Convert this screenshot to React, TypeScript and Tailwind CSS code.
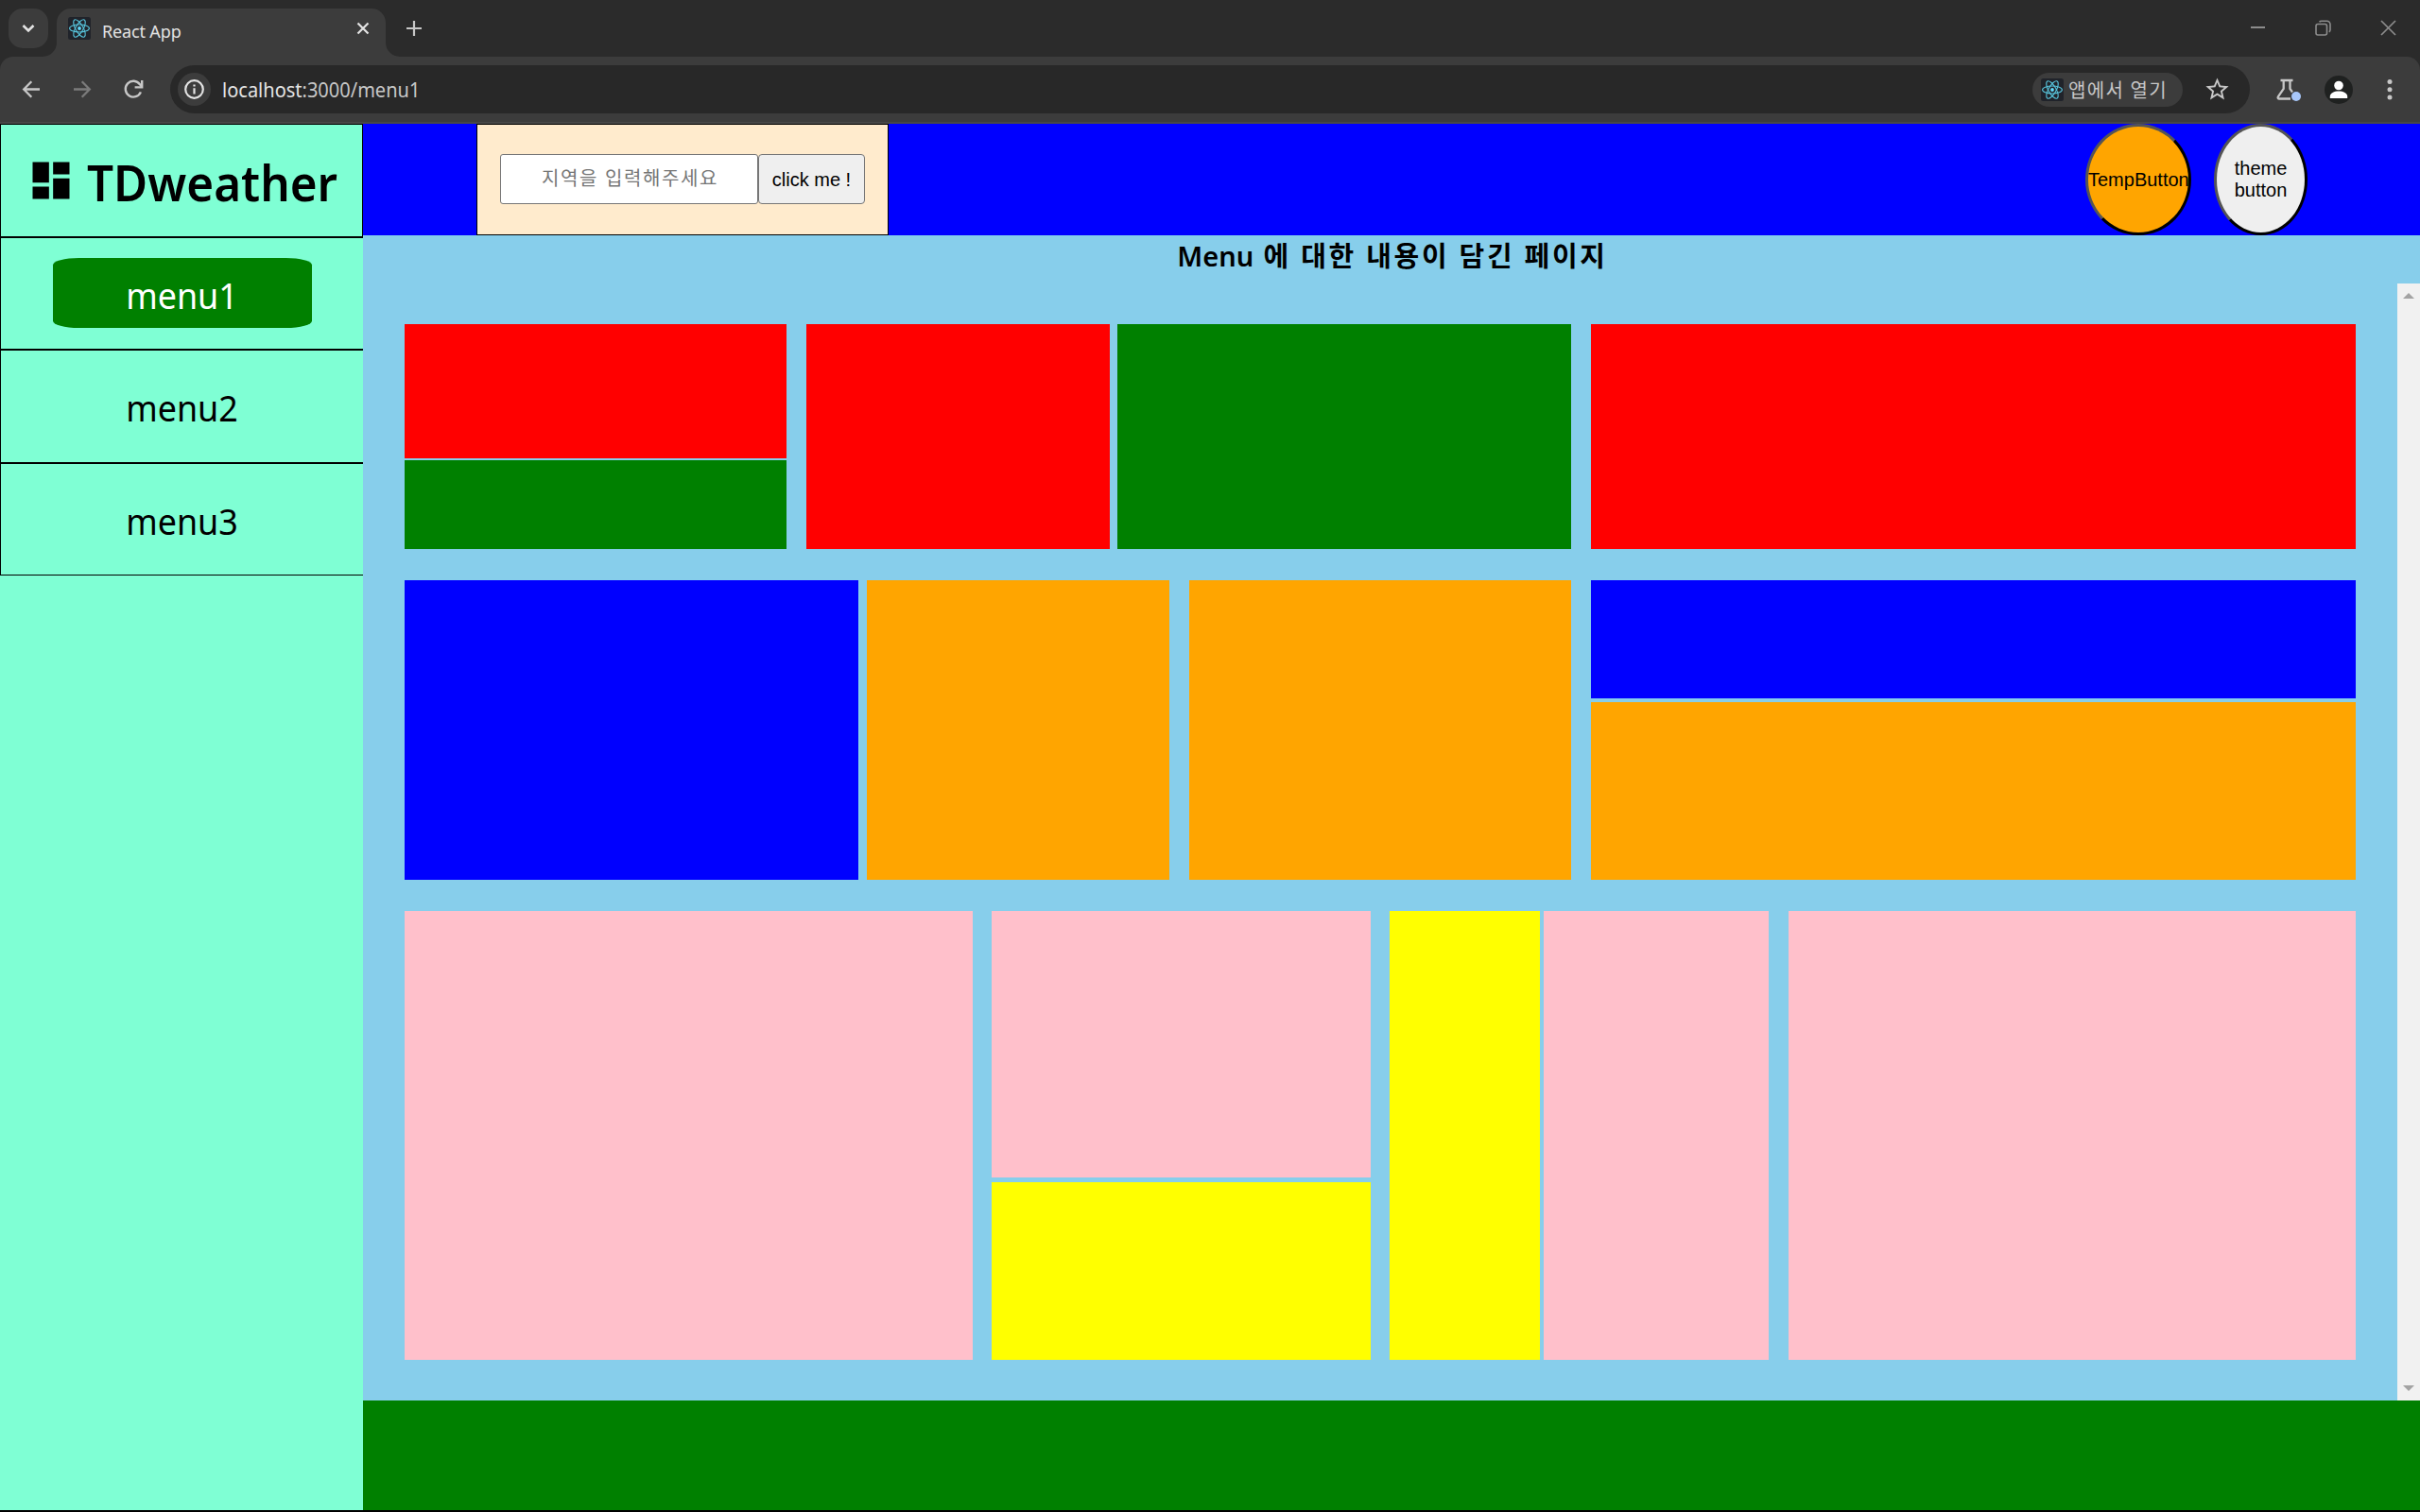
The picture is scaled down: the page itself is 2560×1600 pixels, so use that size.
import { MdDashboard, MdStarOutline } from "react-icons/md";

const KO = "font-['Noto_Sans','Noto_Sans_CJK_KR',sans-serif]";
const ARIAL = "font-['Liberation_Sans',sans-serif]";

function ReactLogo() {
  return (
    <svg viewBox="0 0 24 24" className="block size-6 shrink-0">
      <rect width="24" height="24" rx="2.5" fill="#20232a" />
      <g fill="none" stroke="#58c4dc" strokeWidth="1.1">
        <ellipse cx="12" cy="12" rx="10.4" ry="4" />
        <ellipse cx="12" cy="12" rx="10.4" ry="4" transform="rotate(60 12 12)" />
        <ellipse cx="12" cy="12" rx="10.4" ry="4" transform="rotate(120 12 12)" />
      </g>
      <circle cx="12" cy="12" r="1.9" fill="#61dafb" />
    </svg>
  );
}

function TabStrip() {
  return (
    <div className="flex h-[60px] items-start bg-[#2b2b2b]">
      <div className="ml-[9px] mt-[9px] flex size-[42px] items-center justify-center rounded-[15px] bg-[#3c3c3c]">
        <svg width="14" height="10" viewBox="0 0 14 10" fill="none" stroke="#e3e3e3" strokeWidth="2.6">
          <path d="M1.5 2 7 7.5 12.500 2" />
        </svg>
      </div>
      <svg width="15" height="15" viewBox="0 0 15 15" className="-ml-[6px] mt-[45px]">
        <path d="M15 0v15H0A15 15 0 0 0 15 0Z" fill="#3c3c3c" />
      </svg>
      <div className="mt-[9px] flex h-[51px] w-[348px] items-start rounded-t-[15px] bg-[#3c3c3c] pl-3 pt-[9px]">
        <ReactLogo />
        <span className={`${KO} ml-[12px] mt-[2px] text-[18px] leading-[26px] tracking-[-0.15px] text-[#e3e3e3]`}>React App</span>
        <svg width="14" height="14" viewBox="0 0 14 14" stroke="#e3e3e3" strokeWidth="2.2" className="ml-auto mr-[17px] mt-[5px]">
          <path d="M1.500 1.500l11 11M12.500 1.500l-11 11" />
        </svg>
      </div>
      <svg width="15" height="15" viewBox="0 0 15 15" className="mt-[45px]">
        <path d="M0 0v15H15A15 15 0 0 1 0 0Z" fill="#3c3c3c" />
      </svg>
      <svg width="16" height="16" viewBox="0 0 16 16" stroke="#c7c7c7" strokeWidth="2.2" className="ml-[7px] mt-[22px]">
        <path d="M8 0v16M0 8h16" />
      </svg>
      <div className="ml-auto mr-[25px] mt-[21px] flex gap-[52px]">
        <svg width="17" height="17" viewBox="0 0 17 17" stroke="#8c8c8c" strokeWidth="2">
          <path d="M1 8h15" />
        </svg>
        <svg width="17" height="17" viewBox="0 0 17 17" fill="none" stroke="#8c8c8c" strokeWidth="1.600">
          <rect x="1" y="4.500" width="11.500" height="11.500" rx="2" />
          <path d="M4.500 2.300Q5.200 1.200 7 1.200h5.500a3.500 3.500 0 0 1 3.500 3.500V10.500q0 1.500-1.200 2.200" />
        </svg>
        <svg width="17" height="17" viewBox="0 0 17 17" stroke="#8c8c8c" strokeWidth="1.700">
          <path d="M1 1l15 15M16 1 1 16" />
        </svg>
      </div>
    </div>
  );
}

function Toolbar() {
  return (
    <div className="bg-[#2b2b2b]">
      <div className="flex h-[71px] items-start rounded-t-[14px] border-b-2 border-[#474747] bg-[#3c3c3c]">
        <svg width="20" height="20" viewBox="0 0 20 20" fill="none" stroke="#c7c7c7" strokeWidth="2.300" className="ml-[23px] mt-[25px]">
          <path d="M19 9.500H2.500M10.300 1.300 2.200 9.500l8.100 8.200" />
        </svg>
        <svg width="20" height="20" viewBox="0 0 20 20" fill="none" stroke="#7b7b7b" strokeWidth="2.300" className="ml-[34px] mt-[25px]">
          <path d="M1 9.500h16.500M9.700 1.300l8.100 8.200-8.100 8.200" />
        </svg>
        <svg width="22" height="22" viewBox="0 0 22 22" className="ml-[34px] mt-[24px]">
          <path d="M17.900 13.400A8.400 8.400 0 1 1 17 5.300L19.200 8" fill="none" stroke="#c7c7c7" strokeWidth="2.400" />
          <path d="M18 1h2.400v8.600H11.600V7.200H18Z" fill="#c7c7c7" />
        </svg>
        <div className="ml-[27px] mt-[9px] flex h-[51px] w-[2200px] items-center rounded-full bg-[#282828] pl-2">
          <div className="flex size-[35px] items-center justify-center rounded-full bg-[#3c3c3c]">
            <svg width="21" height="21" viewBox="0 0 21 21" fill="none" stroke="#e3e3e3">
              <circle cx="10.500" cy="10.500" r="9.300" strokeWidth="2.200" />
              <path d="M10.500 9.300v6.200M10.500 5.400v2.200" strokeWidth="2.200" />
            </svg>
          </div>
          <span className={`${KO} ml-[12px] origin-left scale-x-[0.953] text-[21px] leading-[28px] text-[#c7c7c7]`}>
            <span className="text-[#e3e3e3]">localhost</span>:3000/menu1
          </span>
          <div className="ml-auto mr-[22px] flex h-9 w-[159px] items-center rounded-full bg-[#3c3c3c] pl-[9px]">
            <ReactLogo />
            <span className={`${KO} ml-[5px] pt-0.5 text-[20px] leading-[28px] tracking-[1.300px] text-[#c7c7c7]`}>앱에서 열기</span>
          </div>
          <MdStarOutline className="mr-[20px] size-[29px] text-[#c7c7c7]" />
        </div>
        <svg width="28" height="28" viewBox="0 0 28 28" fill="none" className="ml-[27px] mt-[22px]">
          <path d="M5.500 3h13M8.700 3v9L2.900 20.300c-.7 1.200 0 2.200 1.200 2.200H16M15.500 3v9l2.500 3.500" stroke="#c7c7c7" strokeWidth="2.300" />
          <circle cx="22" cy="20" r="5" fill="#a8c7fa" />
        </svg>
        <svg width="30" height="30" viewBox="0 0 30 30" className="ml-[24px] mt-[20px]">
          <circle cx="15" cy="15" r="15" fill="#1f2120" />
          <circle cx="15" cy="10.500" r="4.800" fill="#fff" />
          <path d="M5.800 24v-2c0-3.500 4.500-5.500 9.200-5.500s9.200 2 9.200 5.500v2Z" fill="#fff" />
        </svg>
        <svg width="6" height="22" viewBox="0 0 6 22" fill="#c7c7c7" className="ml-[36px] mt-[24px]">
          <circle cx="3" cy="2.500" r="2.500" />
          <circle cx="3" cy="10.700" r="2.500" />
          <circle cx="3" cy="19" r="2.500" />
        </svg>
      </div>
    </div>
  );
}

function Sidebar() {
  return (
    <aside className={`${KO} w-96 shrink-0 bg-[#7fffd4] text-black`}>
      <div className="flex h-[120px] items-center border border-black pl-[27px]">
        <MdDashboard className="size-[52px]" />
        <span className="ml-[12px] origin-left scale-x-[0.95] pt-[4px] text-[52px] leading-[60px] font-semibold">TDweather</span>
      </div>
      <nav className="text-[39px] leading-[50px]">
        <div className="flex h-[119px] items-start justify-center border border-r-0 border-black pt-[21px]">
          <div className="flex h-[74px] w-[274px] items-center justify-center rounded-[10%] bg-[#008000] pt-1 text-white">
            <span className="scale-x-[0.92]">menu1</span>
          </div>
        </div>
        <div className="flex h-[120px] items-center justify-center border border-r-0 border-black pt-[2px]"><span className="scale-x-[0.92]">menu2</span></div>
        <div className="flex h-[119px] items-center justify-center border border-r-0 border-black pt-[3px]"><span className="scale-x-[0.92]">menu3</span></div>
      </nav>
    </aside>
  );
}

function Header() {
  return (
    <header className="flex h-[118px] shrink-0 bg-[#0000ff] text-[20px]">
      <div className="ml-[120px] flex w-[436px] items-start border border-black bg-[#ffebcd] pl-6 pt-[31px]">
        <div className={`${KO} flex h-[53px] w-[273px] items-center justify-center rounded-[3px] border border-[#767676] bg-white pb-[2px] pl-[2px] tracking-[1.600px] text-[#757575]`}>
          <span>지역을 입력해주세요</span>
        </div>
        <button className={`${ARIAL} h-[53px] w-[113px] rounded-[4px] border border-[#767676] bg-[#efefef] text-black`}>click me !</button>
      </div>
      <button className={`${ARIAL} ml-auto w-[112px] rounded-[50%] border-3 border-t-[#555] border-l-[#555] border-r-black border-b-black bg-[#ffa500] leading-[23px] text-black`}>
        TempButton
      </button>
      <button className={`${ARIAL} ml-6 mr-[119px] w-[99px] rounded-[50%] border-3 border-t-[#555] border-l-[#555] border-r-black border-b-black bg-[#efefef] leading-[23px] text-black`}>
        theme<br />button
      </button>
    </header>
  );
}

function Dashboard() {
  return (
    <div className="flex w-[2152px] flex-col gap-[33px] pl-11 pt-[43px]">
      <div className="flex h-[238px]">
        <div className="flex w-[404px] flex-col gap-[2px]">
          <div className="h-[142px] bg-[#ff0000]" />
          <div className="flex-1 bg-[#008000]" />
        </div>
        <div className="ml-[21px] w-[321px] bg-[#ff0000]" />
        <div className="ml-[8px] w-[480px] bg-[#008000]" />
        <div className="ml-[21px] w-[809px] bg-[#ff0000]" />
      </div>
      <div className="flex h-[317px]">
        <div className="w-[480px] bg-[#0000ff]" />
        <div className="ml-[9px] w-[320px] bg-[#ffa500]" />
        <div className="ml-[21px] w-[404px] bg-[#ffa500]" />
        <div className="ml-[21px] flex w-[809px] flex-col gap-1">
          <div className="h-[125px] bg-[#0000ff]" />
          <div className="flex-1 bg-[#ffa500]" />
        </div>
      </div>
      <div className="flex h-[475px]">
        <div className="w-[601px] bg-[#ffc0cb]" />
        <div className="ml-[20px] flex w-[401px] flex-col gap-[5px]">
          <div className="h-[282px] bg-[#ffc0cb]" />
          <div className="flex-1 bg-[#ffff00]" />
        </div>
        <div className="ml-[20px] w-[159px] bg-[#ffff00]" />
        <div className="ml-[4px] w-[238px] bg-[#ffc0cb]" />
        <div className="ml-[21px] w-[600px] bg-[#ffc0cb]" />
      </div>
    </div>
  );
}

function ScrollTrack() {
  return (
    <div className="flex w-6 flex-col items-center justify-between bg-[#f1f1f1] pt-[10px] pb-[10px]">
      <svg width="12" height="6" viewBox="0 0 12 6"><path d="M0 6 6 0l6 6Z" fill="#a3a3a3" /></svg>
      <svg width="12" height="6" viewBox="0 0 12 6"><path d="M0 0l6 6 6-6Z" fill="#a3a3a3" /></svg>
    </div>
  );
}

export default function App() {
  return (
    <div className="flex h-[1600px] w-[2560px] flex-col overflow-hidden bg-black">
      <TabStrip />
      <Toolbar />
      <div className="flex h-[1467px]">
        <Sidebar />
        <main className="flex flex-1 flex-col bg-[#87ceeb]">
          <Header />
          <h2 className={`${KO} h-[51px] shrink-0 pl-[2px] text-center text-[29px] leading-[43px] font-bold text-black`}>
            <span className="font-semibold">Menu</span><span className="tracking-[2.700px]"> 에 대한 내용이 담긴 페이지</span>
          </h2>
          <div className="flex flex-1 justify-between">
            <Dashboard />
            <ScrollTrack />
          </div>
          <footer className="h-[116px] bg-[#008000]" />
        </main>
      </div>
    </div>
  );
}
